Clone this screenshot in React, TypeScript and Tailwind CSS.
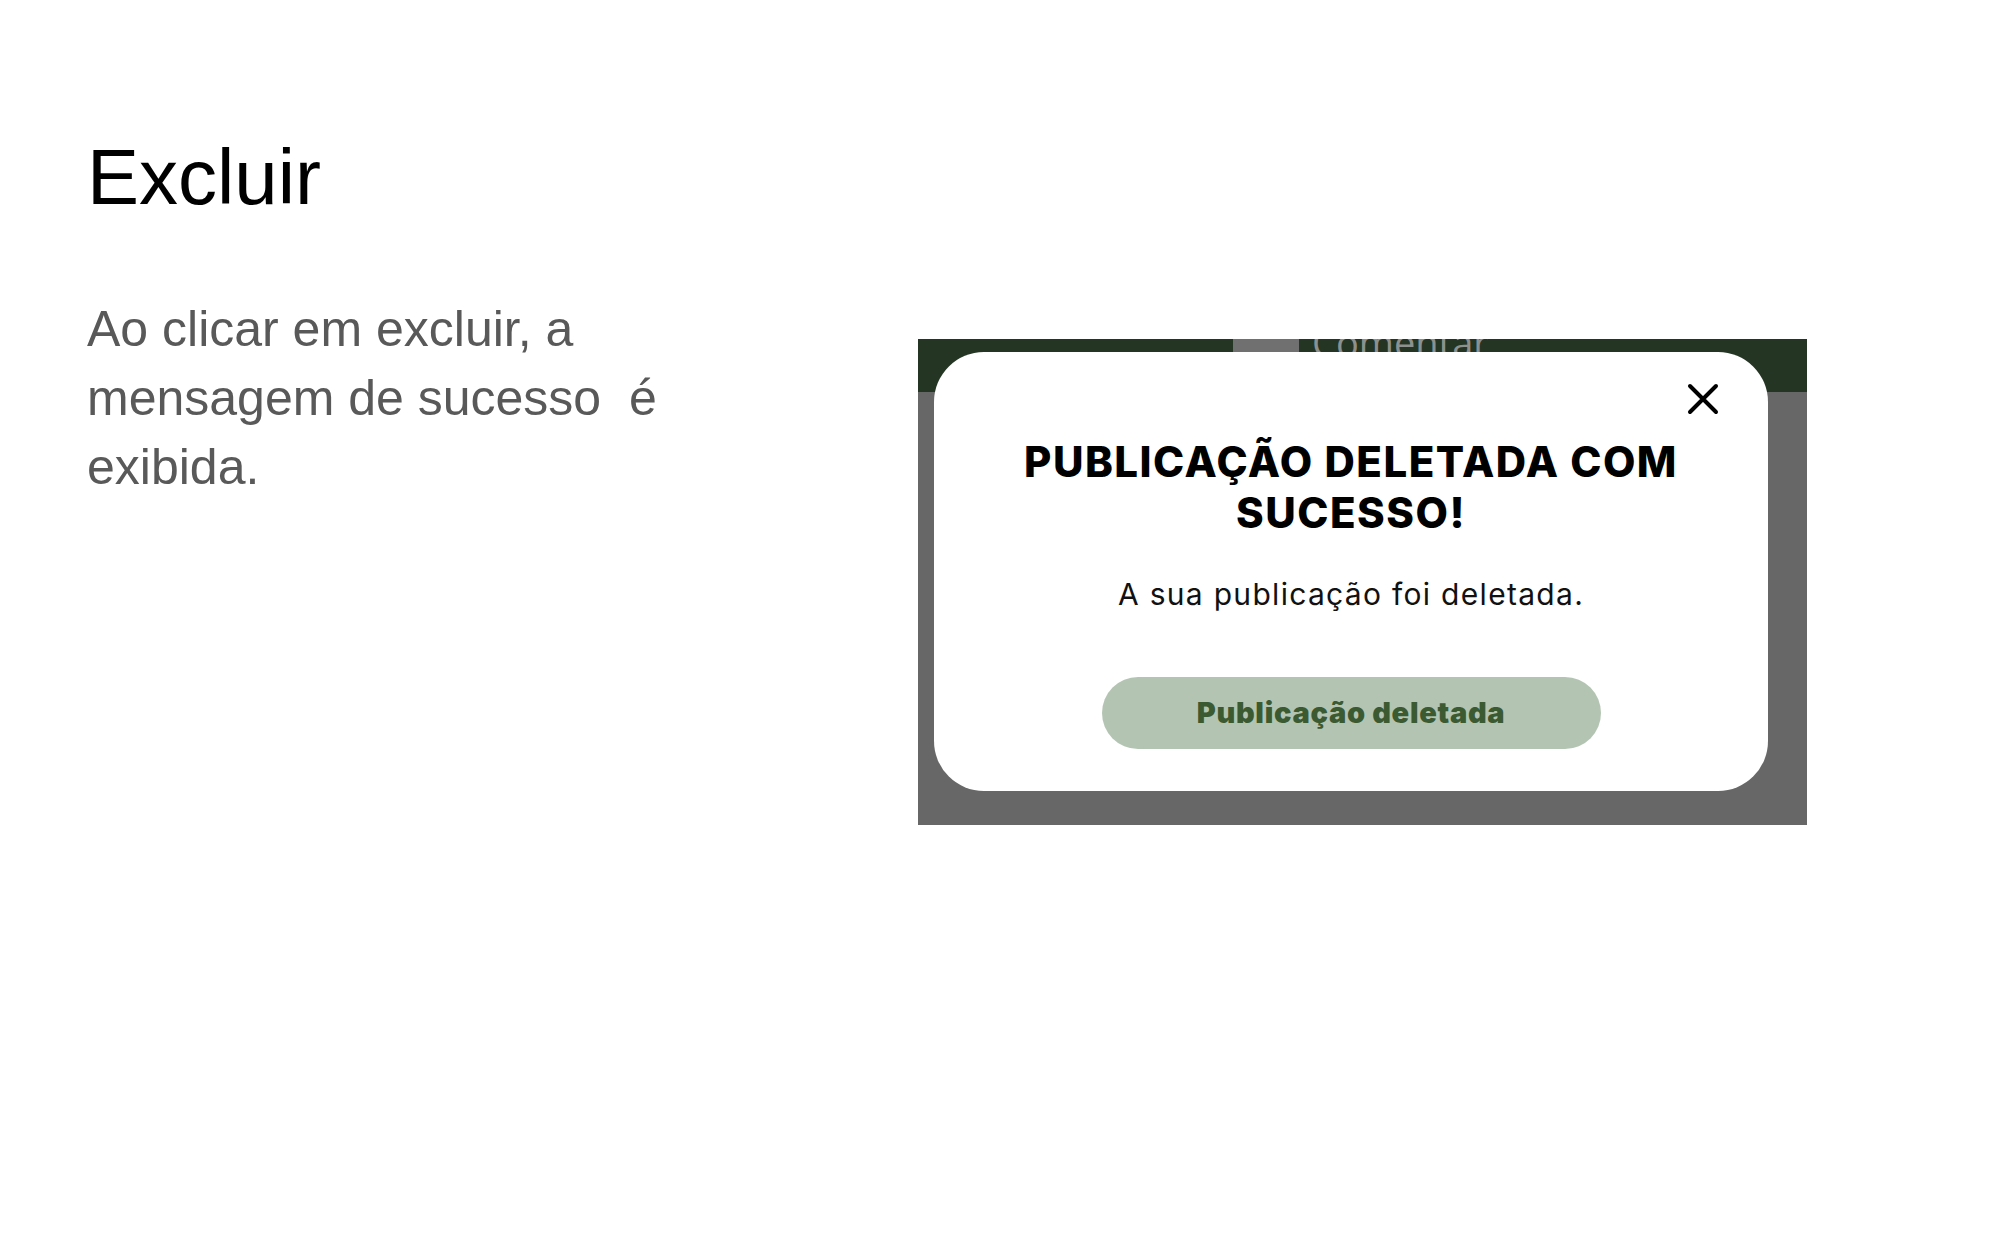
import React from 'react';

function DeletedModalShot() {
  return (
    <div className="relative w-[889px] h-[486px] overflow-hidden bg-[#666766] shrink-0">
      <div className="h-[53px] bg-[#243524] relative">
        <div className="absolute left-[315px] top-0 w-[66px] h-[14px] bg-[#6f706f]" />
        <span className="absolute left-[394px] top-[-16px] text-[38px] leading-none text-[#8d918d] font-['Open_Sans',sans-serif]">
          Comentar
        </span>
      </div>

      <div className="absolute left-[16px] top-[13px] w-[834px] h-[439px] bg-white rounded-[50px] flex flex-col items-center pt-[31px] font-['Inter',sans-serif]">
        <div className="w-full flex justify-end pr-[49px]">
          <svg width="32" height="32" viewBox="0 0 32 32" className="text-black">
            <path d="M3 3 L29 29 M29 3 L3 29" stroke="currentColor" strokeWidth="4" strokeLinecap="round" fill="none" />
          </svg>
        </div>
        <h2 className="mt-[21px] text-center text-[42px] leading-[51px] font-extrabold text-black tracking-[1.5px]">
          PUBLICAÇÃO DELETADA COM
          <br />
          SUCESSO!
        </h2>
        <p className="mt-[38px] text-[30px] leading-[36px] text-[#111] tracking-[1.3px]">A sua publicação foi deletada.</p>
        <button className="mt-[65px] w-[499px] h-[72px] rounded-full bg-[#b3c5b2] text-[#3b5a32] text-[29px] font-black tracking-[0.7px]">
          Publicação deletada
        </button>
      </div>
    </div>
  );
}

export default function App() {
  return (
    <div className="w-[2000px] h-[1250px] bg-white font-['Liberation_Sans',Arial,sans-serif]">
      <div className="pl-[87px] pt-[138px]">
        <h1 className="text-[78px] leading-none text-black">Excluir</h1>
        <div className="flex items-start mt-[79px]">
          <p className="w-[831px] shrink-0 text-[50px] leading-[69px] text-[#595959]">
            Ao clicar em excluir, a
            <br />
            mensagem de sucesso&nbsp; é
            <br />
            exibida.
          </p>
          <div className="mt-[44px]">
            <DeletedModalShot />
          </div>
        </div>
      </div>
    </div>
  );
}
